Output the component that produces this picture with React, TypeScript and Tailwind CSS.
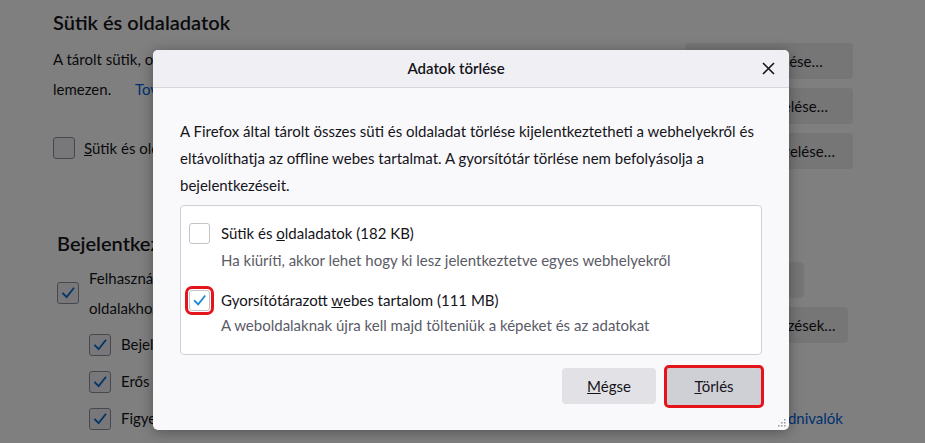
import { ReactNode } from "react";

function CheckMark({ className }: { className?: string }) {
  return (
    <svg viewBox="0 0 22 22" className={className} fill="none">
      <path d="M5.5 11.5 L9.5 15.5 L17 6" stroke="currentColor" strokeWidth="2" strokeLinecap="square" />
    </svg>
  );
}

interface PageCheckboxProps {
  checked?: boolean;
}

function PageCheckbox({ checked }: PageCheckboxProps) {
  return (
    <span className="flex h-[22px] w-[22px] shrink-0 items-center justify-center rounded-[3px] border border-[#8f8f9d] bg-[#f0f0f4] text-[#0a6ccf]">
      {checked && <CheckMark className="h-[20px] w-[20px]" />}
    </span>
  );
}

function PageButton({ children, className }: { children: ReactNode; className?: string }) {
  return (
    <button className={`h-[36px] rounded-[4px] bg-[#ececec] text-[15px] text-[#15141a] ${className ?? ""}`}>
      {children}
    </button>
  );
}

function BackgroundPage() {
  return (
    <div className="text-[#15141a]">
      <div className="flex">
        <div className="w-[685px] overflow-hidden whitespace-nowrap pl-[53px] pt-[8px]">
          <h2 className="text-[20px] font-semibold leading-[28px]">Sütik és oldaladatok</h2>
          <p className="mt-[8px] text-[15px] leading-[30px]">
            A tárolt sütik, oldaladatok és gyorsítótár jelenleg 293 MB-ot foglalnak a
            <br />
            lemezen. <span className="ml-[20px] text-[#0060df]">További tudnivalók</span>
          </p>
          <div className="mt-[33px] flex items-center gap-[9px]">
            <PageCheckbox />
            <span className="text-[15px]">
              <span className="underline">S</span>ütik és oldaladatok törlése a Firefox bezárásakor
            </span>
          </div>
        </div>
        <div className="flex flex-col gap-[9px] pt-[43px]">
          <PageButton className="w-[168px]">Adatok törlése…</PageButton>
          <PageButton className="w-[168px]">Adatok kezelése…</PageButton>
          <PageButton className="w-[168px]">Kivételek kezelése…</PageButton>
        </div>
      </div>

      <div className="mt-[60px] flex">
        <div className="w-[600px] whitespace-nowrap pl-[57px]">
          <h2 className="text-[20px] font-semibold leading-[28px]">Bejelentkezések és jelszavak</h2>
          <div className="mt-[6px] flex items-center gap-[10px]">
            <PageCheckbox checked />
            <span className="text-[15px] leading-[30px]">
              Felhasználónevek és jelszavak mentésének kérdezése a
              <br />
              oldalakhoz
            </span>
          </div>
          <div className="mt-[3px] flex flex-col pl-[32px]">
            <div className="flex h-[37px] items-center gap-[10px]">
              <PageCheckbox checked />
              <span className="text-[15px]">Bejelentkezések és jelszavak automatikus kitöltése</span>
            </div>
            <div className="flex h-[37px] items-center gap-[10px]">
              <PageCheckbox checked />
              <span className="text-[15px]">Erős jelszavak javaslása és előállítása</span>
            </div>
            <div className="flex h-[37px] w-[754px] items-center gap-[10px]">
              <PageCheckbox checked />
              <span className="text-[15px]">Figyelmeztetések a feltört webhelyek jelszavairól</span>
              <span className="ml-auto text-[15px] text-[#0060df]">További tudnivalók</span>
            </div>
          </div>
        </div>
        <div className="flex flex-col gap-[9px] pl-[50px] pt-[33px]">
          <PageButton className="w-[154px]">Kivételek…</PageButton>
          <PageButton className="w-[198px]">Mentett bejelentkezések…</PageButton>
        </div>
      </div>
    </div>
  );
}

interface OptionProps {
  label: ReactNode;
  description: string;
  checked?: boolean;
  highlighted?: boolean;
  className?: string;
  descClassName?: string;
}

function ClearOption({ label, description, checked, highlighted, className, descClassName }: OptionProps) {
  return (
    <div className={className}>
      <div className="flex h-[22px] items-center gap-[11px]">
        <span
          className={`flex h-[21px] w-[21px] shrink-0 items-center justify-center rounded-[3px] border border-[#c4c4c8] bg-white text-[#1a86d6] ${
            highlighted ? "outline-3 outline-offset-1 outline-[#e3141b]" : ""
          }`}
        >
          {checked && <CheckMark className="h-[21px] w-[21px]" />}
        </span>
        <span className="text-[15px] text-[#15141a]">{label}</span>
      </div>
      <div className={`pl-[32px] text-[15px] leading-[22px] text-[#5b5b66] ${descClassName ?? ""}`}>{description}</div>
    </div>
  );
}

function ResizeGrip() {
  return (
    <svg width="10" height="10" viewBox="0 0 10 10" className="text-[#a0a0a8]">
      {[
        [8, 2],
        [5, 5],
        [8, 5],
        [2, 8],
        [5, 8],
        [8, 8],
      ].map(([cx, cy]) => (
        <rect key={`${cx}-${cy}`} x={cx - 1} y={cy - 1} width="1.6" height="1.6" fill="currentColor" />
      ))}
    </svg>
  );
}

function ClearDataDialog() {
  return (
    <div className="absolute left-[153px] top-[50px] flex h-[380px] w-[636px] flex-col overflow-hidden rounded-[5px] bg-[#f9f9fb] shadow-[0_2px_14px_rgba(0,0,0,0.35)]">
      <div className="flex h-[38px] shrink-0 items-center border-b border-[#d7d7db] bg-[#f0f0f4] pr-[12px]">
        <div className="flex-1 text-center text-[15px] font-semibold text-[#15141a]">Adatok törlése</div>
        <button className="flex h-[18px] w-[18px] items-center justify-center text-[#15141a]">
          <svg width="13" height="13" viewBox="0 0 13 13">
            <path d="M1 1 L12 12 M12 1 L1 12" stroke="currentColor" strokeWidth="1.6" />
          </svg>
        </button>
      </div>

      <div className="flex flex-1 flex-col px-[27px] pt-[30px]">
        <p className="text-[15px] leading-[27px] text-[#15141a]">
          A Firefox által tárolt összes süti és oldaladat törlése kijelentkeztetheti a webhelyekről és
          eltávolíthatja az offline webes tartalmat. A gyorsítótár törlése nem befolyásolja a
          bejelentkezéseit.
        </p>

        <div className="mt-[6px] h-[150px] rounded-[4px] border border-[#cfcfd8] bg-white pl-[8px] pt-[16px]">
          <ClearOption
            label={
              <>
                Sütik és <span className="underline">o</span>ldaladatok (182 KB)
              </>
            }
            description="Ha kiüríti, akkor lehet hogy ki lesz jelentkeztetve egyes webhelyekről"
            descClassName="mt-[5px]"
          />
          <ClearOption
            className="mt-[18px]"
            checked
            highlighted
            label={
              <>
                Gyorsítótárazott <span className="underline">w</span>ebes tartalom (111 MB)
              </>
            }
            description="A weboldalaknak újra kell majd tölteniük a képeket és az adatokat"
            descClassName="mt-[3px]"
          />
        </div>

        <div className="mt-[13px] flex justify-end gap-[11px] pr-[1px]">
          <button className="h-[36px] w-[94px] rounded-[4px] bg-[#e2e2e6] text-[15px] text-[#15141a]">
            <span className="underline">M</span>égse
          </button>
          <button className="h-[37px] w-[94px] rounded-[2px] bg-[#cfcfd6] text-[15px] text-[#15141a] outline-3 outline-[#e3141b]">
            <span className="underline">T</span>örlés
          </button>
        </div>
      </div>

      <div className="flex justify-end pb-[2px] pr-[2px]">
        <ResizeGrip />
      </div>
    </div>
  );
}

export default function App() {
  return (
    <div className="relative h-[443px] w-[925px] overflow-hidden bg-white font-['Lato',sans-serif]">
      <BackgroundPage />
      <div className="absolute inset-0 bg-black/50" />
      <ClearDataDialog />
    </div>
  );
}
